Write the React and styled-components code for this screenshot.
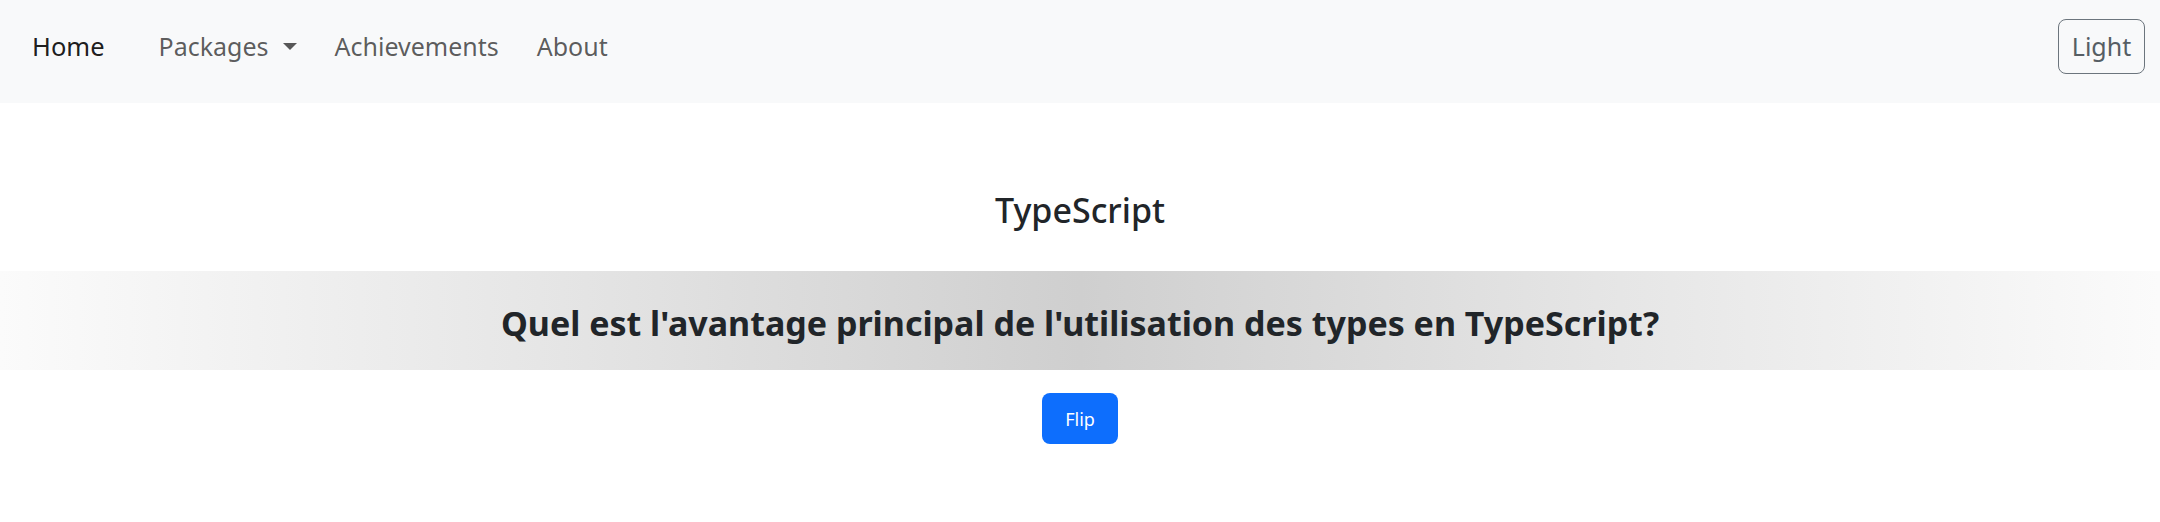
import React from "react";
import styled, { createGlobalStyle } from "styled-components";

const GlobalStyle = createGlobalStyle`
    body {
        margin: 0;
        background: #fff;
        font-family: "Noto Sans", "Open Sans", sans-serif;
        color: #212529;
    }
`;

function App() {
    return (
        <>
            <GlobalStyle />
            <Navbar>
                <Brand>Home</Brand>
                <NavList>
                    <NavLink>
                        Packages
                        <Caret />
                    </NavLink>
                    <NavLink>Achievements</NavLink>
                    <NavLink>About</NavLink>
                </NavList>
                <ThemeButton>Light</ThemeButton>
            </Navbar>
            <Main>
                <Title>TypeScript</Title>
                <Card>
                    <Question>Quel est l'avantage principal de l'utilisation des types en TypeScript?</Question>
                </Card>
                <FlipButton>Flip</FlipButton>
            </Main>
        </>
    );
}

export default App;

const Navbar = styled.nav`
    display: flex;
    align-items: center;
    height: 103px;
    padding: 0 15px 11px 32px;
    background-color: #f8f9fa;
    box-sizing: border-box;
`;

const Brand = styled.a`
    font-size: 25.5px;
    line-height: 38px;
    color: rgba(0, 0, 0, 0.9);
    margin-right: 54px;
`;

const NavList = styled.div`
    display: flex;
    align-items: center;
    gap: 38px;
    flex: 1;
`;

const NavLink = styled.a`
    display: flex;
    align-items: center;
    font-size: 25px;
    line-height: 38px;
    color: rgba(0, 0, 0, 0.65);
`;

const Caret = styled.span`
    display: inline-block;
    margin-left: 14px;
    border-top: 7px solid rgba(0, 0, 0, 0.65);
    border-left: 7px solid transparent;
    border-right: 7px solid transparent;
`;

const ThemeButton = styled.button`
    width: 87px;
    height: 55px;
    font-family: inherit;
    font-size: 25px;
    color: #565e64;
    background: transparent;
    border: 1px solid #6c757d;
    border-radius: 8px;
    padding: 0;
`;

const Main = styled.main`
    display: flex;
    flex-direction: column;
    align-items: center;
`;

const Title = styled.h3`
    margin: 84px 0 0;
    font-size: 34px;
    font-weight: 500;
    line-height: 46px;
`;

const Card = styled.div`
    align-self: stretch;
    margin-top: 38px;
    height: 99px;
    padding-top: 5px;
    box-sizing: border-box;
    display: flex;
    align-items: center;
    justify-content: center;
    background: linear-gradient(to right, #fbfbfb 0%, #e6e6e6 25%, #cfcfcf 50%, #e6e6e6 75%, #fbfbfb 100%);
`;

const Question = styled.h3`
    margin: 0;
    font-size: 34px;
    font-weight: 700;
`;

const FlipButton = styled.button`
    margin-top: 23px;
    width: 76px;
    height: 51px;
    font-family: inherit;
    font-size: 18px;
    color: #fff;
    background-color: #0d6efd;
    border: none;
    border-radius: 8px;
`;
